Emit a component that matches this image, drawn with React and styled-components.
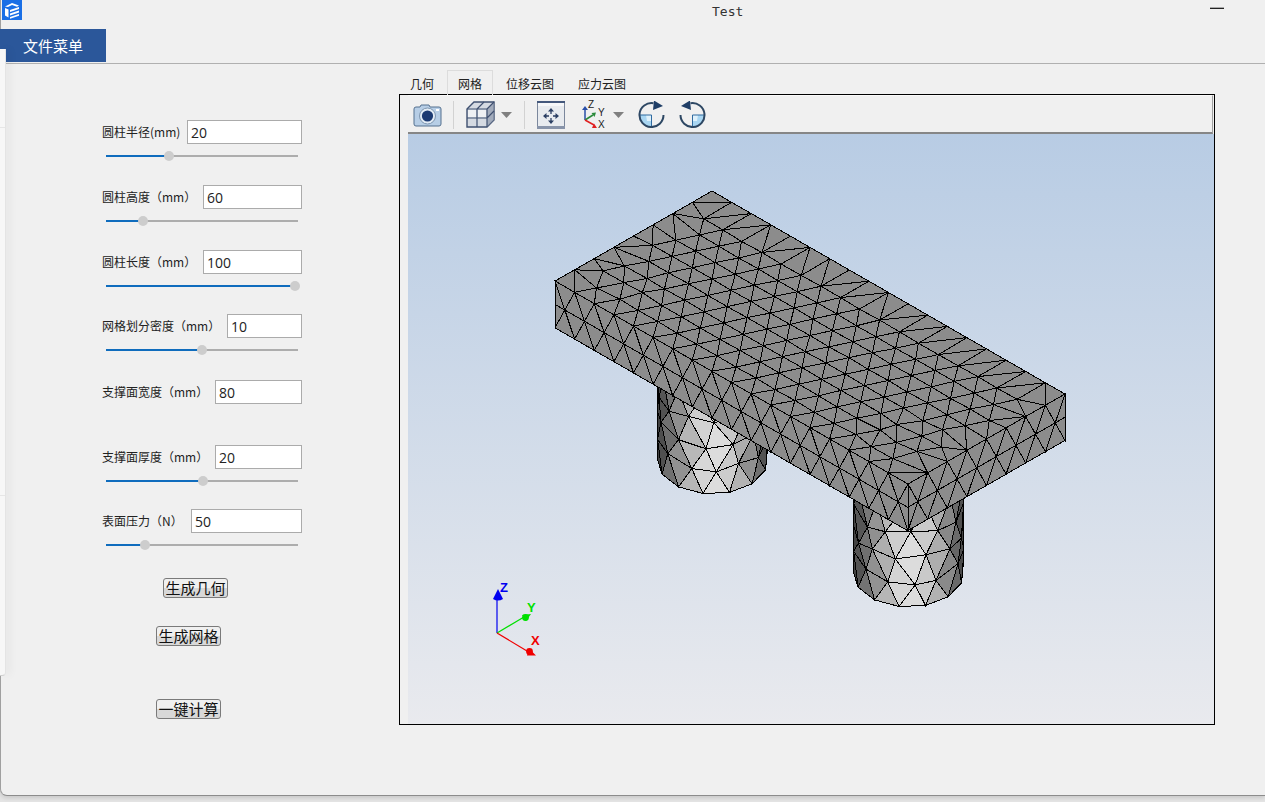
import React from "react";
import styled, { createGlobalStyle } from "styled-components";

const CJK = `"Noto Sans CJK SC", "Liberation Sans", sans-serif`;

const GlobalStyle = createGlobalStyle`
  html, body {
    margin: 0;
    height: 802px;
    overflow: hidden;
    background: #e4e4e4;
    font-family: ${CJK};
  }
`;

/* ---------- mesh generation ---------- */

const seeded = seed => () => {
  seed = (seed * 1664525 + 1013904223) % 4294967296;
  return seed / 4294967296;
};

const delaunay = pts => {
  const n = pts.length;
  const all = [...pts, [-5000, -5000], [5000, -5000], [0, 5000]];
  let tris = [[n, n + 1, n + 2]];
  const inCircle = (t, p) => {
    const [ax, ay] = all[t[0]];
    const [bx, by] = all[t[1]];
    const [cx, cy] = all[t[2]];
    const d = 2 * (ax * (by - cy) + bx * (cy - ay) + cx * (ay - by));
    const a2 = ax * ax + ay * ay;
    const b2 = bx * bx + by * by;
    const c2 = cx * cx + cy * cy;
    const ux = (a2 * (by - cy) + b2 * (cy - ay) + c2 * (ay - by)) / d;
    const uy = (a2 * (cx - bx) + b2 * (ax - cx) + c2 * (bx - ax)) / d;
    return (p[0] - ux) ** 2 + (p[1] - uy) ** 2 < (ax - ux) ** 2 + (ay - uy) ** 2;
  };
  for (let i = 0; i < n; i++) {
    const edges = new Map();
    const keep = [];
    tris.forEach(t => {
      if (inCircle(t, all[i])) {
        [[t[0], t[1]], [t[1], t[2]], [t[2], t[0]]].forEach(([a, b]) => {
          const key = a < b ? `${a}_${b}` : `${b}_${a}`;
          edges.set(key, edges.has(key) ? null : [a, b]);
        });
      } else keep.push(t);
    });
    edges.forEach(e => {
      if (e) keep.push([e[0], e[1], i]);
    });
    tris = keep;
  }
  return tris.filter(t => t.every(v => v < n));
};

// the sides of a rectangle are bowed a little so no three hull points are collinear
const triangulateRect = (pts, w, h) => {
  const bowed = pts.map(([x, y]) => {
    const nx = (x - w / 2) / (w / 2);
    const ny = (y - h / 2) / (h / 2);
    return [
      w / 2 + (x - w / 2) * (1 + 0.002 * (1 - ny * ny)),
      h / 2 + (y - h / 2) * (1 + 0.002 * (1 - nx * nx))
    ];
  });
  return delaunay(bowed);
};

const A = [19.61, 11.28];
const B = [-19.62, 11.25];
const topPoint = (s, t) => [712 + s * A[0] + t * B[0], 191 + s * A[1] + t * B[1]];

const toPath = (pts, tris, map) =>
  tris
    .map(t => {
      const [a, b, c] = t.map(i => map(pts[i][0], pts[i][1]));
      return `M${a[0].toFixed(1)} ${a[1].toFixed(1)}L${b[0].toFixed(1)} ${b[1].toFixed(1)}L${c[0].toFixed(1)} ${c[1].toFixed(1)}Z`;
    })
    .join("");

const buildTop = () => {
  const rnd = seeded(17);
  const pts = [];
  for (let s = 0; s <= 18; s++) pts.push([s, 0], [s, 8]);
  for (let t = 1; t < 8; t++) pts.push([0, t], [18, t]);
  const det = A[0] * B[1] - B[0] * A[1];
  for (let i = -40; i < 40; i++) {
    for (let j = -40; j < 40; j++) {
      const dx = 634.3 + i * 19.6 + j * 3.7 - 712;
      const dy = 326.7 + i * 11.28 - j * 16.3 - 191;
      const s = (dx * B[1] - B[0] * dy) / det;
      const t = (A[0] * dy - dx * A[1]) / det;
      if (s < 0.7 || s > 17.3 || t < 0.7 || t > 7.3) continue;
      const nearCorner = Math.hypot(s, t - 8) < 3.5 || Math.hypot(s - 18, t - 8) < 4.5;
      const k = nearCorner ? 0.2 : 0.04;
      pts.push([s + (rnd() - 0.5) * k, t + (rnd() - 0.5) * k]);
    }
  }
  return toPath(pts, triangulateRect(pts, 18, 8), topPoint);
};

const buildSide = (cells, map) => {
  const pts = [];
  for (let s = 0; s <= cells; s++) pts.push([s, 0], [s, 2]);
  pts.push([0, 1], [cells, 1]);
  for (let s = 0; s < cells; s++) pts.push([s + 0.5, 1]);
  return toPath(pts, triangulateRect(pts, cells, 2), map);
};

const SHADES = [[-1, 58], [-0.9, 80], [-0.75, 118], [-0.4, 180], [-0.1, 220], [0.15, 220], [0.5, 178], [0.84, 110], [1, 58]];

const shadeAt = x => {
  for (let i = 1; i < SHADES.length; i++) {
    if (x <= SHADES[i][0]) {
      const [x0, g0] = SHADES[i - 1];
      const [x1, g1] = SHADES[i];
      return Math.round(g0 + ((x - x0) / (x1 - x0)) * (g1 - g0));
    }
  }
  return 58;
};

const buildCylinder = (cx, cy, seed) => {
  const rnd = seeded(seed);
  const pts = [];
  for (let v = 0; v <= 5; v++) {
    if (v === 0 || v === 5) for (let u = 0; u <= 7; u++) pts.push([u, v]);
    else {
      pts.push([0, v], [7, v]);
      const off = v % 2 ? 0.5 : 1;
      for (let u = off; u < 6.8; u++) pts.push([u + (rnd() - 0.5) * 0.3, v + (rnd() - 0.5) * 0.3]);
    }
  }
  const map = (u, v) => {
    const a = ((183 - 27.7 * u) * Math.PI) / 180;
    return [cx + 55.5 * Math.cos(a), cy + 34 * Math.sin(a) - 24 * v];
  };
  return triangulateRect(pts, 7, 5).map(t => {
    const c = t.map(i => map(pts[i][0], pts[i][1]));
    const mid = (c[0][0] + c[1][0] + c[2][0]) / 3;
    const g = shadeAt((mid - cx) / 55.5);
    return {
      d: `M${c[0][0].toFixed(1)} ${c[0][1].toFixed(1)}L${c[1][0].toFixed(1)} ${c[1][1].toFixed(1)}L${c[2][0].toFixed(1)} ${c[2][1].toFixed(1)}Z`,
      fill: `rgb(${g},${g},${g})`
    };
  });
};

const SLAB = [
  buildTop(),
  buildSide(18, (s, v) => {
    const p = topPoint(s, 8);
    return [p[0], p[1] + 23.4 * v];
  }),
  buildSide(8, (s, v) => {
    const p = topPoint(18, 8 - s);
    return [p[0], p[1] + 23.2 * v];
  })
].join("");

const CYLINDERS = [...buildCylinder(712.5, 460, 5), ...buildCylinder(908.5, 573, 29)];

/* ---------- page ---------- */

const Window = styled.div`
  position: relative;
  height: 795px;
  background: #f0f0f0;
  border-left: 1px solid #a0a0a0;
  border-bottom: 1px solid #8c8c8c;
  border-bottom-left-radius: 7px;
  box-shadow: 0 2px 4px rgba(0, 0, 0, 0.12);
`;

const TitleBar = styled.div`
  display: flex;
  align-items: flex-start;
  height: 29px;
  padding-left: 1px;
`;

const Title = styled.div`
  margin: 4px 0 0 690px;
  font: 13px/16px "DejaVu Sans Mono", monospace;
  color: #333;
`;

const Minimize = styled.div`
  width: 14px;
  height: 1px;
  margin: 8px 41px 0 auto;
  background: #222;
  box-shadow: 0 -1px 0 #aaa;
`;

const MenuBar = styled.div`
  height: 34px;
  margin-left: -1px;
  border-bottom: 1px solid #b0b0b0;
`;

const MenuTab = styled.div`
  width: 106px;
  height: 33px;
  background: #2b579a;
  color: #fff;
  font-size: 15px;
  line-height: 34px;
  text-align: center;
`;

const DrawerEdge = styled.div`
  position: absolute;
  left: -1px;
  top: 49px;
  width: 5px;
  height: 626px;
  background: #f7f7f7;
  border-right: 1px solid #e4e4e4;
  border-bottom: 1px solid #d0d0d0;
  border-bottom-right-radius: 4px;
  box-shadow: 4px 0 8px rgba(0, 0, 0, 0.05);

  &::before,
  &::after {
    content: "";
    position: absolute;
    left: 0;
    right: 0;
    height: 1px;
    background: #e6e6e6;
  }
  &::before {
    top: 78px;
  }
  &::after {
    top: 446px;
  }
`;

const Body = styled.div`
  display: flex;
  margin-left: -1px;
`;

const FormPanel = styled.div`
  width: 399px;
  flex: none;
  box-sizing: border-box;
  padding: 56px 0 0 102px;
`;

const Field = styled.div`
  width: 200px;
  height: ${p => p.$h}px;
`;

const FieldRow = styled.div`
  display: flex;
  align-items: center;
  justify-content: space-between;
  height: 24px;
`;

const Label = styled.label`
  font-size: 12px;
  line-height: 16px;
  color: #222;
  white-space: nowrap;
`;

const NumberInput = styled.input`
  box-sizing: border-box;
  width: ${p => p.$w}px;
  height: 24px;
  padding: 0 3px;
  border: 1px solid #ababab;
  border-radius: 0;
  outline: none;
  background: #fff;
  color: #222;
  font: 14px "Open Sans", sans-serif;
`;

const SliderTrack = styled.div`
  position: relative;
  width: 192px;
  height: 2px;
  margin: 11px 0 0 4px;
  background: #adadad;
`;

const SliderFill = styled.div`
  height: 100%;
  background: #0f6cbd;
`;

const SliderThumb = styled.div`
  position: absolute;
  top: -4px;
  width: 10px;
  height: 10px;
  margin-left: -5px;
  border-radius: 50%;
  background: #cdcdcd;
`;

const ActionButton = styled.button`
  display: block;
  box-sizing: border-box;
  width: 65px;
  height: 20px;
  margin: ${p => p.$top}px 0 0 ${p => p.$left}px;
  padding: 0;
  border: 1px solid #7a7a7a;
  border-radius: 3px;
  background: linear-gradient(#f0f0f0 50%, #d8d8d8 50%);
  color: #111;
  font-family: ${CJK};
  font-size: 15px;
  line-height: 18px;
  font-weight: 400;
`;

const ViewPane = styled.div`
  flex: none;
  width: 816px;
  padding-top: 6px;
`;

const TabRow = styled.div`
  display: flex;
  height: 24px;
`;

const Tab = styled.div`
  box-sizing: border-box;
  height: 25px;
  padding: 0 10px;
  margin-right: 2px;
  border: 1px solid ${p => (p.$active ? "#dcdcdc" : "transparent")};
  border-bottom: none;
  font-size: 12px;
  line-height: 25px;
  color: #222;
`;

const Viewer = styled.div`
  box-sizing: border-box;
  height: 631px;
  padding-left: 8px;
  border: 1px solid #000;
`;

const Toolbar = styled.div`
  display: flex;
  align-items: center;
  box-sizing: border-box;
  height: 39px;
  margin-right: 1px;
  padding: 1px 0 0 5px;
  border-top: 1px solid #fafafa;
  border-right: 1px solid #a0a0a0;
  border-bottom: 2px solid #868686;
`;

const ToolIcon = styled.svg`
  display: block;
  flex: none;
  margin-left: ${p => p.$ml || 0}px;
`;

const MirrorIcon = styled(ToolIcon)`
  transform: ${p => (p.$mirror ? "scaleX(-1)" : "none")};
`;

const Separator = styled.div`
  width: 1px;
  height: 28px;
  margin-left: ${p => p.$ml}px;
  background: #d2d2d2;
`;

const Viewport = styled.div`
  height: 590px;
  background: linear-gradient(#b8cce4, #e9eaee);
`;

const MeshSvg = styled.svg`
  display: block;
`;

const AxisLabel = styled.text`
  font: bold 13px "Liberation Sans", sans-serif;
`;

const ToolLabel = styled.text`
  font: 10px "Liberation Sans", sans-serif;
  fill: #222;
`;

const fields = [
  { label: "圆柱半径(mm)", value: "20", w: 115, h: 65, pos: 63 },
  { label: "圆柱高度（mm）", value: "60", w: 99, h: 65, pos: 37 },
  { label: "圆柱长度（mm）", value: "100", w: 99, h: 64, pos: 189 },
  { label: "网格划分密度（mm）", value: "10", w: 75, h: 66, pos: 96 },
  { label: "支撑面宽度（mm）", value: "80", w: 87, h: 65 },
  { label: "支撑面厚度（mm）", value: "20", w: 87, h: 64, pos: 97 },
  { label: "表面压力（N）", value: "50", w: 111, h: 69, pos: 39 }
];

const Logo = () => (
  <ToolIcon width="20" height="20" viewBox="0 0 20 20">
    <rect width="20" height="20" fill="#1a6fe6" />
    <path d="M3 6.5 10 3l7 2.5-2 1.2L10 5 6 7z" fill="#fff" />
    <path d="M3 8l3.5 1.5v8L3 15.5z" fill="#fff" />
    <path d="M8 10l9-3v2l-9 3zM8 13.5l9-3v2l-9 3zM8 17l9-3v1.8L8 18.8z" fill="#fff" />
  </ToolIcon>
);

const CameraIcon = () => (
  <ToolIcon width="29" height="24" viewBox="0 0 29 24">
    <path d="M3 4h4l1-2h8l1 2h9a2 2 0 0 1 2 2v15a2 2 0 0 1-2 2H3a2 2 0 0 1-2-2V6a2 2 0 0 1 2-2z" fill="#b7cee6" stroke="#55708f" />
    <circle cx="14.5" cy="13" r="8" fill="#e3ecf5" stroke="#7d95b0" />
    <circle cx="14.5" cy="13" r="5.6" fill="#1c3a72" />
    <rect x="23" y="6" width="3" height="2" fill="#fff" />
  </ToolIcon>
);

const CubeIcon = () => (
  <ToolIcon $ml={12} width="29" height="27" viewBox="0 0 29 27">
    <path d="M1 8 8 1h20v18l-7 7H1z" fill="#d5dae2" stroke="#3f5070" strokeWidth="1.4" />
    <path d="M21 8l7-7v18l-7 7z" fill="#8d99ad" fillOpacity="0.7" />
    <path d="M2 9h8v7H2zM12 9h8v7h-8z" fill="#eef0f3" />
    <path d="M1 8h20v18M21 8l7-7M11 8v18M1 17h20M21 17l7-7M11 8l7-7" fill="none" stroke="#3f5070" strokeWidth="1.2" />
  </ToolIcon>
);

const DropArrow = ({ ml }) => (
  <ToolIcon $ml={ml} width="11" height="6" viewBox="0 0 11 6">
    <path d="M0 0h11L5.5 6z" fill="#808080" />
  </ToolIcon>
);

const FitIcon = () => (
  <ToolIcon $ml={12} width="28" height="28" viewBox="0 0 28 28">
    <rect x="0.5" y="0.5" width="27" height="27" fill="#e8ebef" stroke="#7b879c" />
    <rect x="0" y="0" width="28" height="2" fill="#44587c" />
    <rect x="1" y="2" width="26" height="3" fill="#f6f7f9" />
    <rect x="0" y="25" width="28" height="3" fill="#8894aa" />
    <path d="M14 10v3M14 17v3M9 15h3M16 15h3" stroke="#2b3f63" strokeWidth="1.3" />
    <path d="M14 7l3 3.5h-6zM14 23l3-3.5h-6zM6 15l3.5-3v6zM22 15l-3.5-3v6z" fill="#2b3f63" />
  </ToolIcon>
);

const AxesIcon = () => (
  <ToolIcon $ml={17} width="27" height="34" viewBox="-1 -4 27 34">
    <path d="M2 18V7" stroke="#2a4fa8" strokeWidth="1.5" />
    <path d="M2 4l3 4h-6z" fill="#2a4fa8" />
    <path d="M2 18l8-5" stroke="#2a8a3a" strokeWidth="1.5" />
    <path d="M13 10.5l-1.5 4.5-3-4z" fill="#2a8a3a" />
    <path d="M2 18l9 5" stroke="#e02020" strokeWidth="1.5" />
    <path d="M14 26h-5l2-4.5z" fill="#e02020" />
    <ToolLabel x="5" y="6">Z</ToolLabel>
    <ToolLabel x="15" y="14">Y</ToolLabel>
    <ToolLabel x="15" y="26">X</ToolLabel>
  </ToolIcon>
);

const RotateIcon = ({ mirror }) => (
  <MirrorIcon $ml={14} $mirror={mirror} width="27" height="27" viewBox="0 0 27 27">
    <path d="M1.5 14H13v11.5A12 12 0 0 1 1.5 14z" fill="#a9d6f2" />
    <path d="M8 14h5v6H9z" fill="#dff1fb" />
    <path d="M1.5 14H13.5V26" fill="none" stroke="#2f6aa0" strokeWidth="1" />
    <path d="M25.5 14A12 12 0 1 1 15.5 2.2" fill="none" stroke="#2d4763" strokeWidth="2" />
    <path d="M16 -0.5 25 5 15 9z" fill="#1f3e66" />
  </MirrorIcon>
);

const Triad = () => (
  <g>
    <path d="M497 633V598" stroke="#0000f0" strokeWidth="1.2" />
    <path d="M498 589l5 10q-5 3-10 0z" fill="#0000f0" />
    <AxisLabel x="500" y="592" fill="#0000f0">Z</AxisLabel>
    <path d="M497 633l27-16" stroke="#00e000" strokeWidth="1.2" />
    <circle cx="525.5" cy="617.5" r="3.4" fill="#00e000" />
    <path d="M531 614l-9 1 4 6z" fill="#00e000" />
    <AxisLabel x="527" y="612" fill="#00e000">Y</AxisLabel>
    <path d="M497 633l30 18" stroke="#f00000" strokeWidth="1.2" />
    <circle cx="529.5" cy="651.5" r="3.4" fill="#f00000" />
    <path d="M536 655.5h-9l2-7z" fill="#f00000" />
    <AxisLabel x="531" y="645" fill="#f00000">X</AxisLabel>
  </g>
);

const App = () => (
  <>
    <GlobalStyle />
    <Window>
      <TitleBar>
        <Logo />
        <Title>Test</Title>
        <Minimize />
      </TitleBar>
      <MenuBar>
        <MenuTab>文件菜单</MenuTab>
      </MenuBar>
      <DrawerEdge />
      <Body>
        <FormPanel>
          {fields.map(f => (
            <Field key={f.label} $h={f.h}>
              <FieldRow>
                <Label>{f.label}</Label>
                <NumberInput $w={f.w} defaultValue={f.value} />
              </FieldRow>
              {f.pos !== undefined && (
                <SliderTrack>
                  <SliderFill style={{ width: f.pos }} />
                  <SliderThumb style={{ left: f.pos }} />
                </SliderTrack>
              )}
            </Field>
          ))}
          <ActionButton $top={0} $left={61}>生成几何</ActionButton>
          <ActionButton $top={28} $left={54}>生成网格</ActionButton>
          <ActionButton $top={53} $left={54}>一键计算</ActionButton>
        </FormPanel>
        <ViewPane>
          <TabRow>
            <Tab>几何</Tab>
            <Tab $active>网格</Tab>
            <Tab>位移云图</Tab>
            <Tab>应力云图</Tab>
          </TabRow>
          <Viewer>
            <Toolbar>
              <CameraIcon />
              <Separator $ml={11} />
              <CubeIcon />
              <DropArrow ml={6} />
              <Separator $ml={12} />
              <FitIcon />
              <AxesIcon />
              <DropArrow ml={4} />
              <RotateIcon />
              <RotateIcon mirror />
            </Toolbar>
            <Viewport>
              <MeshSvg width="806" height="590" viewBox="408 134 806 590">
                <g shapeRendering="crispEdges" stroke="#000" strokeWidth="1">
                  {CYLINDERS.map((c, i) => (
                    <path key={i} d={c.d} fill={c.fill} />
                  ))}
                  <path d={SLAB} fill="#8c8c8c" />
                </g>
                <Triad />
              </MeshSvg>
            </Viewport>
          </Viewer>
        </ViewPane>
      </Body>
    </Window>
  </>
);

export default App;
